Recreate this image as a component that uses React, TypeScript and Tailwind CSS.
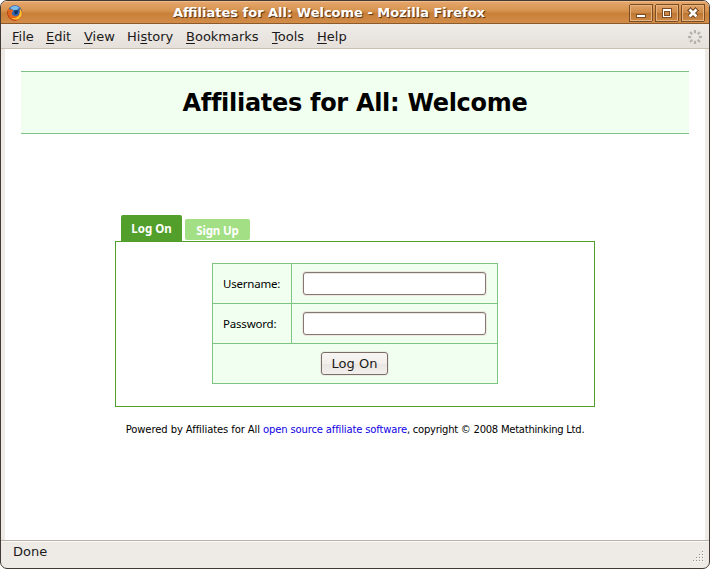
import React from 'react';

const menus = [
  { pre: '', key: 'F', post: 'ile', cls: 'w-[34px]' },
  { pre: '', key: 'E', post: 'dit', cls: 'w-[38px]' },
  { pre: '', key: 'V', post: 'iew', cls: 'w-[43px]' },
  { pre: 'Hi', key: 's', post: 'tory', cls: 'w-[59px]' },
  { pre: '', key: 'B', post: 'ookmarks', cls: 'w-[86px]' },
  { pre: '', key: 'T', post: 'ools', cls: 'w-[45px]' },
  { pre: '', key: 'H', post: 'elp', cls: 'w-[40px]' },
];

function FirefoxIcon() {
  return (
    <svg className="ml-1.5 h-4 w-4" viewBox="0.5 0.5 15 15">
      <circle cx="8" cy="7.600" r="6.800" fill="#2f69b3" />
      <path d="M3.500 3.500C5.500 1 10 .9 12 3L9.500 5.200 7 5.500Z" fill="#7dbdeb" />
      <path d="M7.500 5.500l3.500.2-.8 3.300-2.700.5z" fill="#12305f" />
      <path d="M1.800 3.500L3 4.700 5.500 4.700 6.500 6.200 5 7.500 5.300 9.600 8 11 11 10.300 12.500 7.500 12.300 3.500 14.500 6 15 9 13.300 13 9.500 15.300 5.500 15 2.200 12.700.8 9 .9 5.500Z" fill="#e4681c" />
      <path d="M12.600 4l1.600 3-.2 3.500-2.400 3-4 .8-3.200-1.500 4 .2 3.200-2.300 1-3z" fill="#fbcb2f" />
      <path d="M1.200 6L1 9l1.700 3.500 3 2 3.500.6" fill="none" stroke="#b23a18" strokeWidth=".8" />
    </svg>
  );
}

function WindowButton({ kind }: { kind: 'min' | 'max' | 'close' }) {
  return (
    <svg className="h-[18px] w-6" viewBox="0 0 24 18" shapeRendering="crispEdges">
      <defs>
        <linearGradient id={'face-' + kind} x1="0" y1="0" x2="0" y2="1">
          <stop offset="0" stopColor="#e4a66b" />
          <stop offset=".48" stopColor="#cd8947" />
          <stop offset=".5" stopColor="#bd7632" />
          <stop offset="1" stopColor="#cf8947" />
        </linearGradient>
      </defs>
      <rect x=".5" y=".5" width="23" height="17" rx="1.500" fill={`url(#face-${kind})`} stroke="#7b4d24" />
      <rect x="1.500" y="1.500" width="21" height="15" fill="none" stroke="#e6b27d" />
      {kind === 'min' && <rect x="7.500" y="10.500" width="9" height="3" fill="#fff" stroke="#7b4d24" />}
      {kind === 'max' && (
        <>
          <rect x="7.500" y="4.500" width="9" height="9" fill="#fff" stroke="#7b4d24" />
          <rect x="9.500" y="7.500" width="5" height="4" fill="#cd8947" stroke="#7b4d24" />
        </>
      )}
      {kind === 'close' && (
        <>
          <path d="M8 5l8 8M16 5l-8 8" stroke="#7b4d24" strokeWidth="4.500" />
          <path d="M8.500 5.500l7 7M15.500 5.500l-7 7" stroke="#fff" strokeWidth="2.600" shapeRendering="auto" />
        </>
      )}
    </svg>
  );
}

function Throbber() {
  return (
    <svg className="mt-px mr-[6px] h-4 w-4" viewBox="0 0 16 16">
      {[0, 45, 90, 135, 180, 225, 270, 315].map((a) => (
        <rect key={a} x="6.900" y="1" width="2.200" height="3.200" fill="#b5b1ad" transform={`rotate(${a} 8 8)`} />
      ))}
    </svg>
  );
}

function Grip() {
  return (
    <svg className="mb-[5px] h-3 w-3 self-end" viewBox="0 0 12 12" shapeRendering="crispEdges">
      {[[9, 0], [6, 3], [9, 3], [3, 6], [6, 6], [9, 6], [0, 9], [3, 9], [6, 9], [9, 9]].map(([x, y]) => (
        <g key={`${x}-${y}`}>
          <rect x={x + 1} y={y + 1} width="1" height="1" fill="#fff" />
          <rect x={x} y={y} width="1" height="1" fill="#98928c" />
        </g>
      ))}
    </svg>
  );
}

function Field({ label, type }: { label: string; type: string }) {
  return (
    <div className="flex h-10 border-b border-[#7fc582]">
      <label className="flex w-[79px] items-center border-r border-[#7fc582] pl-[10px] font-['Noto_Sans',sans-serif] text-[11.5px] tracking-[-0.2px] whitespace-nowrap">
        {label}
      </label>
      <div className="pt-2 pl-[11px]">
        <input
          type={type}
          aria-label={label}
          className="block h-[23px] w-[183px] rounded-[3px] border border-[#857870] bg-white px-1 shadow-[0_0_0_1px_#ebe7e1,inset_0_1px_0_#e8e6e4] outline-none"
        />
      </div>
    </div>
  );
}

export default function App() {
  return (
    <div className="flex h-[569px] w-[710px] flex-col overflow-hidden rounded-[7px] border border-[#443a34] bg-[#eeebe7] font-['DejaVu_Sans',sans-serif] text-[#1a1a1a]">
      <header className="flex h-[23px] shrink-0 items-center border-t border-b border-t-[#f0bd8a] border-b-[#8d5a2b] bg-[linear-gradient(#e5a56a_0%,#d79450_40%,#c98038_55%,#d28d4a_100%)]">
        <FirefoxIcon />
        <h1 className="flex-1 pl-[8px] text-center text-[13px] leading-5 font-bold whitespace-nowrap text-white [text-shadow:1px_1px_1px_#4b2e16]">
          Affiliates for All: Welcome - Mozilla Firefox
        </h1>
        <div className="mr-[4px] ml-[2px] flex gap-[2px]">
          <WindowButton kind="min" />
          <WindowButton kind="max" />
          <WindowButton kind="close" />
        </div>
      </header>
      <nav className="flex h-[25px] shrink-0 items-center border-b border-[#cbbfb2] bg-[linear-gradient(#efebe7,#e5e0da)] pt-px pl-[11px] text-[13px]">
        {menus.map((m) => (
          <span key={m.key} className={`${m.cls} whitespace-nowrap`}>
            {m.pre}
            <span className="underline decoration-1 underline-offset-2">{m.key}</span>
            {m.post}
          </span>
        ))}
        <div className="flex-1" />
        <Throbber />
      </nav>
      <main className="mr-[4px] ml-[4px] h-[491px] shrink-0 bg-white px-4 pt-[22px] text-black">
        <div className="flex h-[63px] items-center justify-center border-y border-[#7fc087] bg-[#f0fff0]">
          <h2 className="text-[24px] leading-none font-bold tracking-[-0.3px] whitespace-nowrap [font-variant-ligatures:common-ligatures]">
            Affiliates for All: Welcome
          </h2>
        </div>
        <div className="mx-auto mt-[81px] w-[480px]">
          <div className="flex h-[26px] items-end gap-[3px] pl-[6px] font-['Noto_Sans',sans-serif] text-[11.5px] font-bold text-white">
            <div className="flex h-[26px] w-[61px] items-center justify-center rounded-t-[2px] bg-[#52a02b] pt-[2px]">Log On</div>
            <div className="mb-[1px] flex h-[21px] w-[65px] items-center justify-center rounded-[2px] bg-[#a3e085] pt-[2px] tracking-[-0.15px]">Sign Up</div>
          </div>
          <div className="h-[166px] border border-[#52a02b] pt-[21px]">
            <form className="ml-[96px] h-[121px] w-[286px] border border-[#7fc582] bg-[#f0fff0]">
              <Field label="Username:" type="text" />
              <Field label="Password:" type="password" />
              <div className="pt-2 pl-[108px]">
                <button type="button" className="block h-[23px] w-[67px] rounded-[3px] border border-[#7b6d65] bg-[linear-gradient(#f8f6f4_0%,#f1eeeb_50%,#e9e5e1_52%,#f2efed_100%)] text-[13px] leading-[22px] text-[#1a1a1a] shadow-[0_0_0_1px_#e8eee4]">
                  Log On
                </button>
              </div>
            </form>
          </div>
          <p className="mt-[15px] flex justify-center text-[10px] leading-4 whitespace-pre">
            <span className="tracking-[-0.09px]">Powered by Affiliates for All </span>
            <a className="tracking-[-0.15px] text-[#1000e5]">open source affiliate software</a>
            <span className="tracking-[-0.25px]">, copyright © 2008 Metathinking Ltd.</span>
          </p>
        </div>
      </main>
      <footer className="flex flex-1 items-center justify-between border-t border-[#b8b2aa] pr-[4px] pl-[12px] text-[13px] shadow-[inset_0_1px_0_#faf8f6]">
        <span className="pb-[5px]">Done</span>
        <Grip />
      </footer>
    </div>
  );
}
